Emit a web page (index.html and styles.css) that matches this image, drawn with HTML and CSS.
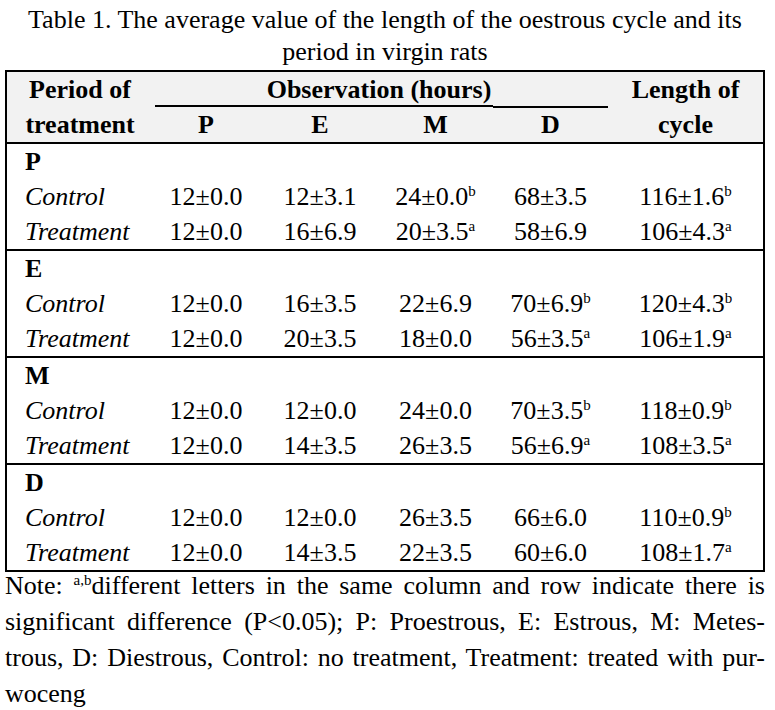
FILE: index.html
```html
<!DOCTYPE html>
<html lang="en">
<head>
<meta charset="utf-8">
<title>Table 1</title>
<link rel="stylesheet" href="styles.css">
</head>
<body>
<div class="page">
  <p class="caption">Table 1. The average value of the length of the oestrous cycle and its<br>period in virgin rats</p>

  <div class="table">
    <div class="thead">
      <div class="h-label">Period of<br>treatment</div>
      <div class="h-obs">Observation (hours)</div>
      <div class="h-line h-line-a"></div>
      <div class="h-line h-line-b"></div>
      <div class="h-len">Length of<br>cycle</div>
      <div class="h-col h-p">P</div>
      <div class="h-col h-e">E</div>
      <div class="h-col h-m">M</div>
      <div class="h-col h-d">D</div>
    </div>

    <div class="section">
      <div class="sec-title">P</div>
      <div class="lbl">Control</div><div class="v">12±0.0</div><div class="v">12±3.1</div><div class="v">24±0.0<sup>b</sup></div><div class="v">68±3.5</div><div class="v">116±1.6<sup>b</sup></div>
      <div class="lbl">Treatment</div><div class="v">12±0.0</div><div class="v">16±6.9</div><div class="v">20±3.5<sup>a</sup></div><div class="v">58±6.9</div><div class="v">106±4.3<sup>a</sup></div>
    </div>

    <div class="section">
      <div class="sec-title">E</div>
      <div class="lbl">Control</div><div class="v">12±0.0</div><div class="v">16±3.5</div><div class="v">22±6.9</div><div class="v">70±6.9<sup>b</sup></div><div class="v">120±4.3<sup>b</sup></div>
      <div class="lbl">Treatment</div><div class="v">12±0.0</div><div class="v">20±3.5</div><div class="v">18±0.0</div><div class="v">56±3.5<sup>a</sup></div><div class="v">106±1.9<sup>a</sup></div>
    </div>

    <div class="section">
      <div class="sec-title">M</div>
      <div class="lbl">Control</div><div class="v">12±0.0</div><div class="v">12±0.0</div><div class="v">24±0.0</div><div class="v">70±3.5<sup>b</sup></div><div class="v">118±0.9<sup>b</sup></div>
      <div class="lbl">Treatment</div><div class="v">12±0.0</div><div class="v">14±3.5</div><div class="v">26±3.5</div><div class="v">56±6.9<sup>a</sup></div><div class="v">108±3.5<sup>a</sup></div>
    </div>

    <div class="section">
      <div class="sec-title">D</div>
      <div class="lbl">Control</div><div class="v">12±0.0</div><div class="v">12±0.0</div><div class="v">26±3.5</div><div class="v">66±6.0</div><div class="v">110±0.9<sup>b</sup></div>
      <div class="lbl">Treatment</div><div class="v">12±0.0</div><div class="v">14±3.5</div><div class="v">22±3.5</div><div class="v">60±6.0</div><div class="v">108±1.7<sup>a</sup></div>
    </div>
  </div>

  <div class="note">
    <span class="nl">Note: <sup>a,b</sup>different letters in the same column and row indicate there is</span>
    <span class="nl">significant difference (P&lt;0.05); P: Proestrous, E: Estrous, M: Metes-</span>
    <span class="nl">trous, D: Diestrous, Control: no treatment, Treatment: treated with pur-</span>
    <span class="nl nl-last">woceng</span>
  </div>
</div>
</body>
</html>
```

FILE: styles.css
```css
html, body {
  margin: 0;
  padding: 0;
  background: #ffffff;
}

body {
  font-family: "Liberation Serif", "Times New Roman", serif;
  font-size: 26px;
  color: #000000;
}

.page {
  width: 760px;
  padding: 4px 0 0 5px;
}

.caption {
  margin: 0;
  text-align: center;
  line-height: 32px;
  width: 760px;
}

.table {
  margin-top: 2px;
  border: 2px solid #000;
  width: 756px;
}

.thead,
.section {
  display: grid;
  grid-template-columns: 143px 112px 116px 115px 115px 155px;
}

.thead {
  grid-template-rows: 36px 34px;
  background: #f2f2f2;
  border-bottom: 2px solid #000;
  font-weight: bold;
}

.h-label {
  grid-column: 1;
  grid-row: 1 / 3;
  text-align: center;
  line-height: 35px;
  padding-left: 3px;
}

.h-len {
  grid-column: 6;
  grid-row: 1 / 3;
  text-align: center;
  line-height: 35px;
}

.h-obs {
  grid-column: 2 / 6;
  grid-row: 1;
  text-align: center;
  line-height: 35px;
}

.h-line {
  grid-row: 1;
  align-self: end;
  height: 0;
  border-bottom: 2px solid #000;
}

.h-line-a {
  grid-column: 2 / 5;
  margin: 0 0 1px 5px;
}

.h-line-b {
  grid-column: 5;
  margin: 0 0 0 0;
}

.h-col {
  grid-row: 2;
  text-align: center;
  line-height: 34px;
}

.h-p { grid-column: 2; }
.h-e { grid-column: 3; }
.h-m { grid-column: 4; }
.h-d { grid-column: 5; }

.section {
  grid-auto-rows: 35px;
}

.section + .section {
  border-top: 2px solid #000;
}

.sec-title {
  grid-column: 1 / 7;
  font-weight: bold;
  line-height: 35px;
  padding-left: 18px;
}

.lbl {
  font-style: italic;
  line-height: 35px;
  padding-left: 18px;
}

.v {
  text-align: center;
  line-height: 35px;
  white-space: nowrap;
}

sup {
  font-size: 15px;
  line-height: 0;
  vertical-align: 9px;
}

.note {
  margin-top: -4px;
  width: 760px;
  line-height: 36px;
}

.nl {
  display: block;
  text-align: justify;
  text-align-last: justify;
}

.nl-last {
  text-align-last: left;
}
```
